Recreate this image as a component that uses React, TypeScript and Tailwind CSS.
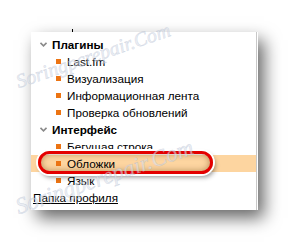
import React from 'react';

const font = { fontFamily: '"Liberation Sans", Arial, sans-serif' };
const markFont = { fontFamily: '"Liberation Serif", serif', WebkitTextStroke: '0.5px rgba(150,165,190,0.6)' };

type Row = { label: string; kind: 'head' | 'item' | 'link'; active?: boolean };

const rows: Row[] = [
  { label: 'Плагины', kind: 'head' },
  { label: 'Last.fm', kind: 'item' },
  { label: 'Визуализация', kind: 'item' },
  { label: 'Информационная лента', kind: 'item' },
  { label: 'Проверка обновлений', kind: 'item' },
  { label: 'Интерфейс', kind: 'head' },
  { label: 'Бегущая строка', kind: 'item' },
  { label: 'Обложки', kind: 'item', active: true },
  { label: 'Язык', kind: 'item' },
  { label: 'Папка профиля', kind: 'link' },
];

function Chevron() {
  return (
    <svg width="7" height="5" viewBox="0 0 7 5" className="shrink-0">
      <path d="M0.5 0.8 L3.5 3.8 L6.5 0.8" fill="none" stroke="#8a8a8a" strokeWidth="1.6" />
    </svg>
  );
}

export default function App() {
  return (
    <div className="relative w-[291px] h-[244px] bg-white overflow-hidden" style={font}>
      <div className="ml-[31px] mt-[32px] w-[227px] h-[178px] bg-white shadow-[6px_8px_16px_rgba(0,0,0,0.6)] border-r border-white">
        <div className="relative h-full border-r border-[#c8c8c8] pt-[4px] text-[11.7px] text-black">
          <span className="absolute left-[41px] top-[-3px] w-[1px] h-[3px] bg-black" />
          {rows.map((r, i) => (
            <div
              key={i}
              className={`h-[17px] flex items-center ${r.active ? 'bg-[#fdd5a0]' : ''}`}
            >
              {r.kind === 'head' && (
                <div className="flex items-center pl-[9px] gap-[5px]">
                  <Chevron />
                  <span className="font-bold">{r.label}</span>
                </div>
              )}
              {r.kind === 'item' && (
                <div className="flex items-center pl-[25px] gap-[6px]">
                  <span className="w-[5px] h-[5px] bg-[#ec7413] shrink-0" />
                  <span>{r.label}</span>
                </div>
              )}
              {r.kind === 'link' && <span className="pl-[2px] underline">{r.label}</span>}
            </div>
          ))}
        </div>
      </div>

      <div className="absolute left-[38px] top-[151px] w-[175px] h-[23px] rounded-[12px] border-[3px] border-[#e40000] shadow-[inset_0_0_6px_rgba(90,50,0,0.45),0_0_0_2px_#ffffff,2px_3px_5px_rgba(0,0,0,0.45)]" />

      <div
        className="absolute left-[20px] top-[70px] h-[22px] leading-[22px] whitespace-nowrap origin-bottom-left -rotate-[19deg] italic text-[20px] text-[#dfe5ef] opacity-60 pointer-events-none"
        style={markFont}
      >
        Soringpcrepair.Com
      </div>
      <div
        className="absolute left-[20px] top-[196px] h-[22px] leading-[22px] whitespace-nowrap origin-bottom-left -rotate-[19deg] italic text-[23px] text-[#dfe5ef] opacity-60 pointer-events-none"
        style={markFont}
      >
        Soringpcrepair.Com
      </div>
    </div>
  );
}
